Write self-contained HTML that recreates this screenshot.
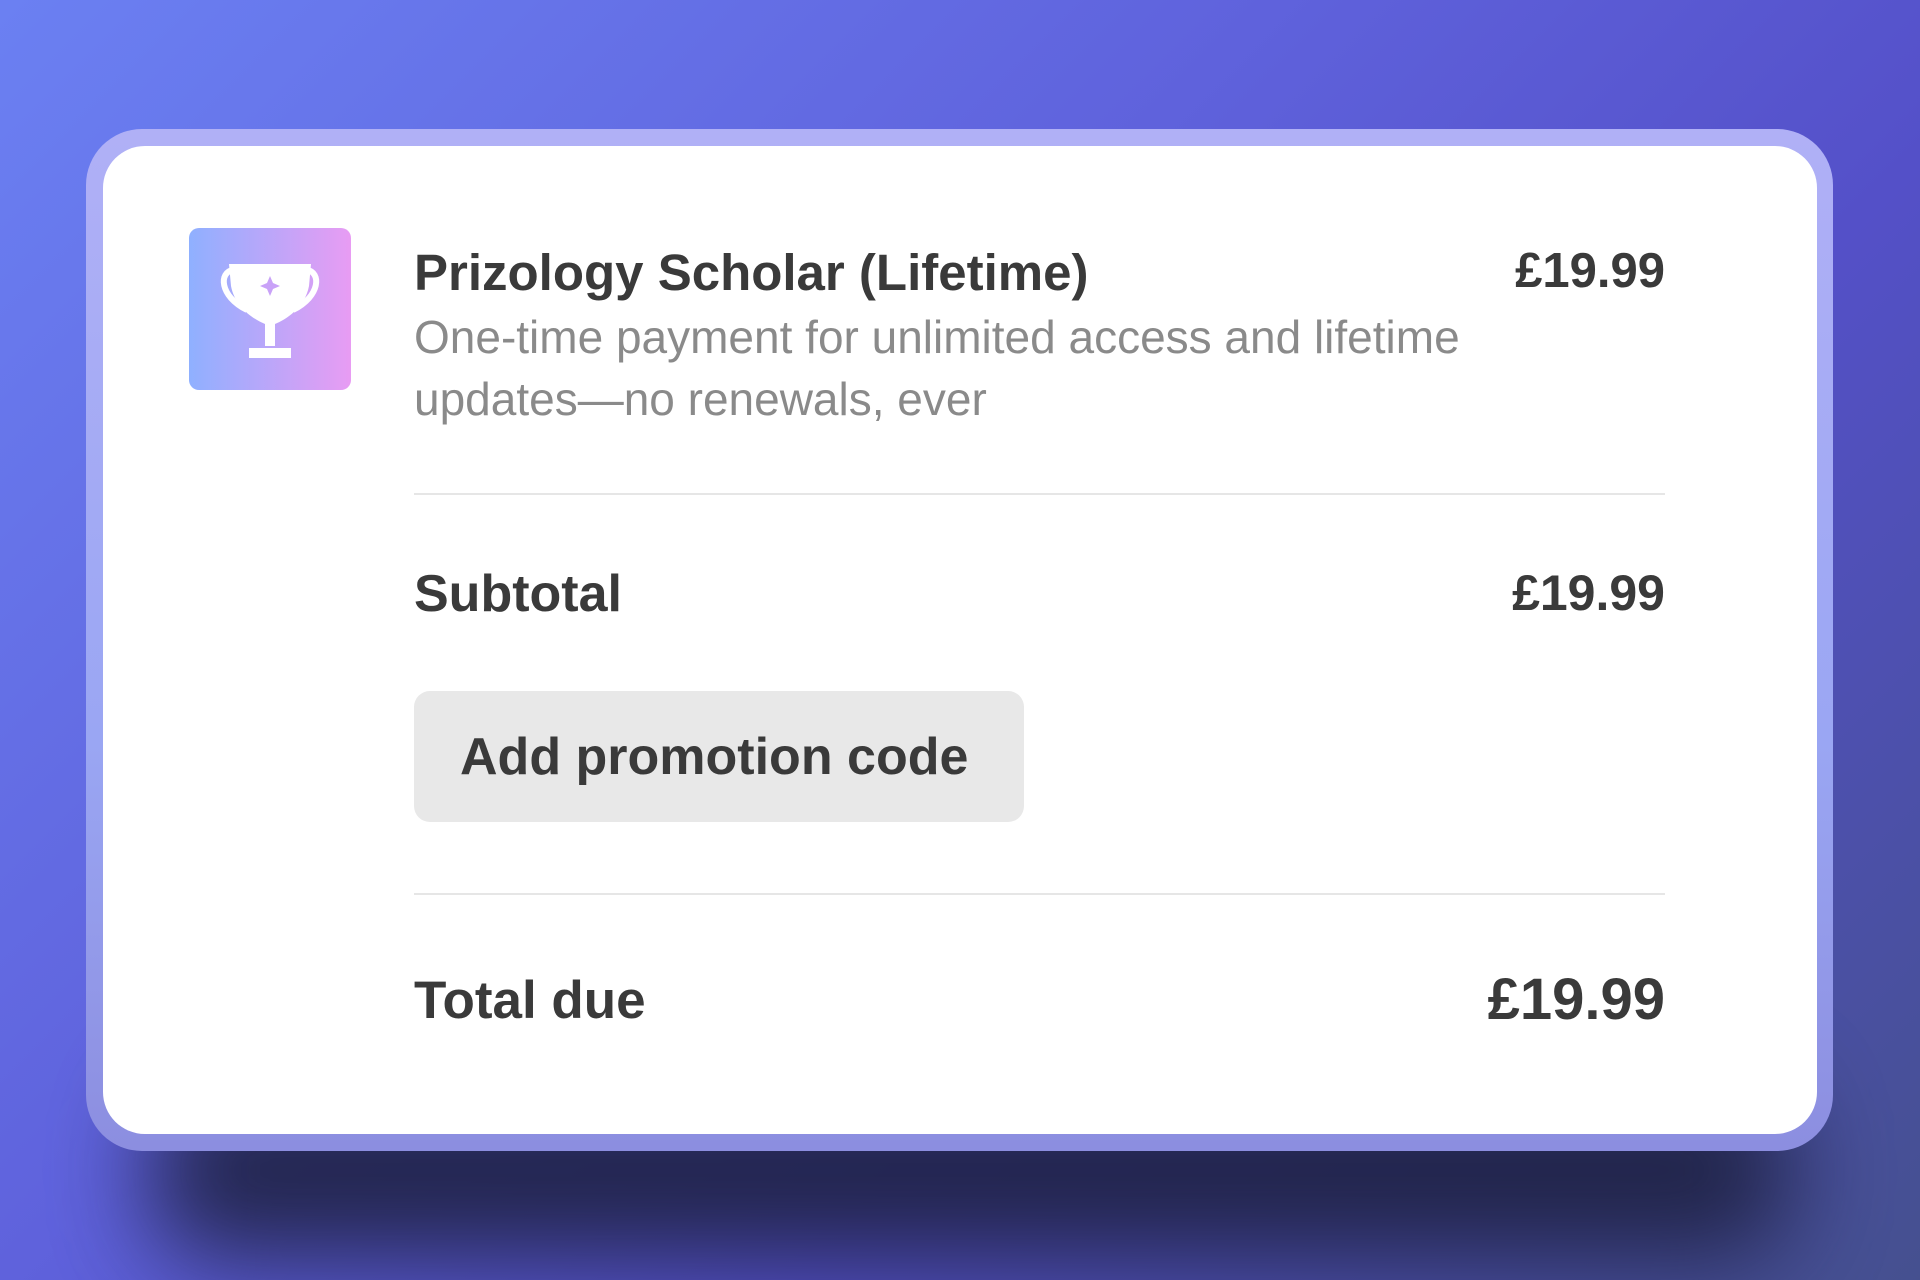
<!DOCTYPE html>
<html><head><meta charset="utf-8"><style>
html,body{margin:0;padding:0;overflow:hidden;width:1920px;height:1280px;}
body{position:relative;font-family:"Liberation Sans",sans-serif;
background:linear-gradient(135deg,#6b80f2 0%,#5f62dc 40%,#5450c8 65%,#45508f 100%);}
.shadow{position:absolute;left:150px;top:1080px;width:1640px;height:180px;background:#1d2040;filter:blur(50px);border-radius:60px;opacity:.9}
.outer{position:absolute;left:86px;top:129px;width:1747px;height:1022px;border-radius:56px;background:linear-gradient(180deg,#b0b0f6,#9aa6f3 60%,#8c8ee0);}
.card{position:absolute;left:103px;top:146px;width:1714px;height:988px;border-radius:42px;background:#fff;}
.icon{position:absolute;left:189px;top:228px;width:162px;height:162px;border-radius:10px;background:linear-gradient(90deg,#8fb0ff,#e89cf3);}
.t{position:absolute;color:#3a3a3a;white-space:nowrap}
.div{position:absolute;left:414px;width:1251px;height:2px;background:#e6e6e6}
.btn{position:absolute;left:414px;top:691px;width:610px;height:131px;border-radius:16px;background:#e8e8e8;}
</style></head><body>
<div class="shadow"></div>
<div class="outer"></div>
<div class="card"></div>
<div class="icon"><svg width="162" height="162" viewBox="0 0 162 162">
<g fill="none" stroke="#fff" stroke-width="6"><path d="M44 42 C30 44 30 68 58 82"/><path d="M118 42 C132 44 132 68 104 82"/></g>
<path d="M40 36 H122 L120 58 C116 80 96 92 86 96 V118 H76 V96 C66 92 46 80 42 58 Z" fill="#fff"/>
<path d="M81 48 L84 55 L91 58 L84 61 L81 68 L78 61 L71 58 L78 55 Z" fill="#c9a2f8"/>
<rect x="60" y="120" width="42" height="10" fill="#fff"/>
</svg></div>
<div class="t" style="left:414px;top:243px;font-size:51px;font-weight:bold;">Prizology Scholar (Lifetime)</div>
<div class="t" style="right:255px;top:243px;font-size:49px;font-weight:bold;">£19.99</div>
<div class="t" style="left:414px;top:306px;font-size:46px;color:#8a8a8a;line-height:62px;white-space:normal;width:1100px">One-time payment for unlimited access and lifetime updates—no renewals, ever</div>
<div class="div" style="top:493px"></div>
<div class="t" style="left:414px;top:564px;font-size:52px;font-weight:bold;">Subtotal</div>
<div class="t" style="right:255px;top:564px;font-size:50px;font-weight:bold;">£19.99</div>
<div class="btn"></div>
<div class="t" style="left:460px;top:727px;font-size:52px;font-weight:bold;">Add promotion code</div>
<div class="div" style="top:893px"></div>
<div class="t" style="left:414px;top:970px;font-size:53px;font-weight:bold;">Total due</div>
<div class="t" style="right:255px;top:966px;font-size:58px;font-weight:bold;">£19.99</div>
</body></html>
